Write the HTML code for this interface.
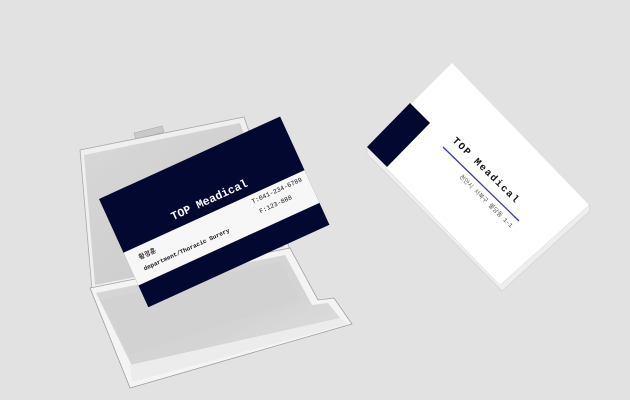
<!DOCTYPE html>
<html><head><meta charset="utf-8"><style>
html,body{margin:0;padding:0;background:#e2e2e2;width:630px;height:400px;overflow:hidden}
svg{display:block}
text{font-family:"Liberation Mono","NanumGothic",monospace}
</style></head><body>
<svg width="630" height="400" viewBox="0 0 630 400">
<defs>
<linearGradient id="lid" x1="0" y1="0" x2="1" y2="1">
<stop offset="0" stop-color="#d8d8d8"/><stop offset="1" stop-color="#c8c8c8"/></linearGradient>
<linearGradient id="base" x1="0" y1="0" x2="1" y2="1">
<stop offset="0" stop-color="#d6d6d6"/><stop offset="0.6" stop-color="#d4d4d4"/><stop offset="1" stop-color="#e4e4e4"/></linearGradient>
</defs>
<polygon points="134,133 162,126 164,132 136,139" fill="#c9c9c9" stroke="#aaa" stroke-width="0.6"/>
<polygon points="80,150 244,117 290,250 92,290" fill="#efefef" stroke="#aaaaaa" stroke-width="0.8"/>
<polygon points="84,155 240,123 284,247 95,285" fill="url(#lid)"/>
<polygon points="90,288 290,248 318,300 334,298 352,324 130,388" fill="#f4f4f4" stroke="#a0a0a0" stroke-width="0.8"/>
<polygon points="96,293 285,255 312,305 328,303 340,318 135,372" fill="url(#base)"/>
<polygon points="100,300 280,262 300,300 130,355" fill="#d2d2d2"/>
<polygon points="130,365 340,318 348,324 132,382" fill="#ececec"/>
<g transform="translate(99,199) rotate(-24.5)">
<rect x="0" y="0" width="199" height="119" fill="#030830"/>
<rect x="0" y="59" width="199" height="36" fill="#f7f7f7"/>
<text x="100" y="50" fill="#fff" font-size="11.5" font-weight="bold" text-anchor="middle">TOP Meadical</text>
<text x="138" y="68" fill="#111" font-size="6.5">T:041-234-6789</text>
<text x="141" y="80" fill="#111" font-size="6.5">F:123-888</text>
<text x="12" y="72" fill="#111" font-size="6.5" font-weight="bold">황정훈</text>
<text x="12" y="84" fill="#111" font-size="6" font-weight="bold">department/Thoracic Surery</text>
</g>
<polygon points="367,148 367,154 502,291 590,211 589,205 500,285" fill="#eeeeee" stroke="#d0d0d0" stroke-width="0.6"/>
<polygon points="452,63 589,205 500,285 367,148" fill="#ffffff"/>
<polygon points="367,147 410,103 430,123 387,167" fill="#030830"/>
<line x1="443" y1="147" x2="519" y2="221" stroke="#3a3aa8" stroke-width="1.3"/>
<text x="0" y="0" transform="translate(452,141) rotate(44.5)" font-size="10" font-weight="bold" fill="#111" letter-spacing="1.5">TOP Meadical</text>
<text x="0" y="0" transform="translate(459,177) rotate(44.5)" font-size="6" fill="#333">천안시 서북구 불당동 1-1</text>
</svg>
</body></html>
